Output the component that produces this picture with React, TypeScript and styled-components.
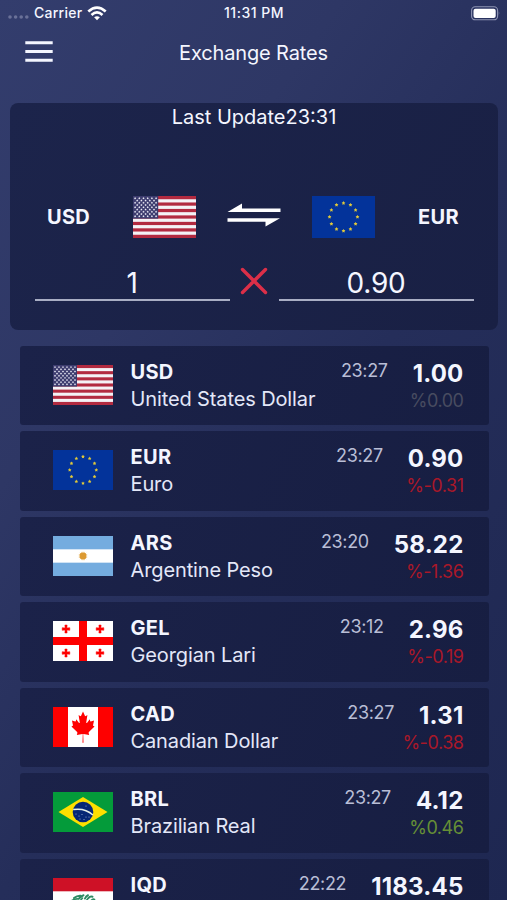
import React from "react";
import styled, { createGlobalStyle } from "styled-components";

const GlobalStyle = createGlobalStyle`
  * { box-sizing: border-box; }
  html, body { margin: 0; padding: 0; height: 900px; overflow: hidden; }
  body { font-family: Inter, "Liberation Sans", sans-serif; color: #f4f6ff; }
`;

const Screen = styled.main`
  width: 507px;
  height: 900px;
  overflow: hidden;
  display: flex;
  flex-direction: column;
  background: linear-gradient(125deg, #333d6d 0%, #2e3765 30%, #252e5a 55%, #1e2751 100%);
`;

const StatusBar = styled.div`
  height: 27px;
  flex: none;
  display: grid;
  grid-template-columns: 1fr auto 1fr;
  align-items: center;
  padding: 0 7px 1px 8px;
  font-size: 14px;
  font-weight: 500;
  line-height: 26px;
`;

const Carrier = styled.div`
  display: flex;
  align-items: center;
  gap: 5px;
  letter-spacing: 0.25px;
`;

const Clock = styled.div`
  letter-spacing: 0.5px;
`;

const BatterySlot = styled.div`
  display: flex;
  justify-content: flex-end;
`;

const Header = styled.header`
  height: 76px;
  flex: none;
  display: grid;
  grid-template-columns: 1fr auto 1fr;
  align-items: start;
  padding: 11px 25px 0;
`;

const MenuButton = styled.button`
  border: 0;
  padding: 0;
  margin: 2px 0 0;
  width: 28px;
  height: 24px;
  background: none;
  display: block;
`;

const Title = styled.h1`
  margin: 0;
  font-size: 20px;
  font-weight: 400;
  line-height: 30px;
  letter-spacing: -0.15px;
`;

const Converter = styled.section`
  flex: none;
  height: 227px;
  margin: 0 9px 0 10px;
  border-radius: 8px;
  background: linear-gradient(120deg, #1c244b, #192044);
  display: flex;
  flex-direction: column;
`;

const Updated = styled.div`
  text-align: center;
  font-size: 20px;
  line-height: 27px;
  height: 92px;
  padding-top: 0.5px;
`;

const Pair = styled.div`
  display: grid;
  grid-template-columns: 117px 63px 116px 63px 1fr;
  align-items: center;
  height: 43px;
  padding-left: 6px;
`;

const PairCode = styled.div<{ $end?: boolean }>`
  font-size: 20px;
  font-weight: 700;
  letter-spacing: 0.3px;
  padding-left: ${(p) => (p.$end ? 43 : 31)}px;
`;

const Swap = styled.div`
  display: flex;
  justify-content: center;
  padding-bottom: 4px;
`;

const Amounts = styled.div`
  display: grid;
  grid-template-columns: 195px 49px 195px;
  margin: 25px 0 0 24.5px;
`;

const Amount = styled.div`
  height: 38px;
  border-bottom: 2px solid #a9aec4;
  text-align: center;
  font-size: 28px;
  font-weight: 400;
  line-height: 41px;
  letter-spacing: -0.2px;
`;

const Cross = styled.div`
  display: flex;
  justify-content: center;
  padding-top: 4px;
`;

const List = styled.ul`
  list-style: none;
  margin: 15.5px 18.5px 0 19.5px;
  padding: 0;
  display: flex;
  flex-direction: column;
  gap: 6px;
`;

const Row = styled.li`
  flex: none;
  height: 79.5px;
  border-radius: 3px;
  background: linear-gradient(110deg, #1b2249, #171e42);
  display: flex;
  padding: 0 25px 0 33.5px;
`;

const FlagSlot = styled.div`
  padding-top: 19px;
  width: 77.5px;
`;

const Names = styled.div`
  flex: 1;
  padding-top: 13px;
  white-space: nowrap;
`;

const Code = styled.div`
  font-size: 20px;
  font-weight: 700;
  line-height: 26px;
  letter-spacing: 0.3px;
`;

const Name = styled.div`
  font-size: 20px;
  line-height: 29px;
  letter-spacing: -0.12px;
  color: #e3e7f8;
`;

const Time = styled.div`
  padding-top: 12px;
  margin-right: 25px;
  font-size: 18px;
  font-weight: 400;
  line-height: 26px;
  letter-spacing: -0.35px;
  color: #b9bed6;
`;

const Rate = styled.div`
  font-size: 24px;
  font-weight: 700;
  line-height: 30px;
  letter-spacing: 0.2px;
  text-align: right;
`;

const Figures = styled.div`
  display: grid;
  grid-template-columns: auto auto;
  align-content: start;
  justify-items: end;
`;

const RateCell = styled.div`
  padding-top: 13px;
`;

const Change = styled.div<{ $tone: string }>`
  grid-column: 1 / -1;
  font-size: 18px;
  font-weight: 400;
  line-height: 23px;
  letter-spacing: -0.45px;
  color: ${(p) => p.$tone};
`;

const FlagSvg = styled.svg`
  display: block;
`;

const starPoints = (cx: number, cy: number, r: number) =>
  Array.from({ length: 10 }, (_, i) => {
    const a = (Math.PI / 5) * i - Math.PI / 2;
    const q = i % 2 ? r * 0.55 : r;
    return `${(cx + q * Math.cos(a)).toFixed(2)},${(cy + q * Math.sin(a)).toFixed(2)}`;
  }).join(" ");

function UnitedStates() {
  return (
    <>
      <rect width="60" height="40" fill="#f4f2f6" />
      {[0, 2, 4, 6, 8, 10, 12].map((i) => (
        <rect key={i} y={(i * 40) / 13} width="60" height={40 / 13} fill="#b22a40" />
      ))}
      <rect width="24" height={(40 / 13) * 7} fill="#3c3b6e" />
      {Array.from({ length: 9 }, (_, r) =>
        Array.from({ length: r % 2 ? 5 : 6 }, (_, c) => (
          <polygon
            key={`${r}-${c}`}
            points={starPoints(2 + c * 4 + (r % 2 ? 2 : 0), 2.15 + r * 2.15, 1.15)}
            fill="#e8e8f4"
          />
        ))
      )}
    </>
  );
}

function Europe() {
  return (
    <>
      <rect width="60" height="40" fill="#03339a" />
      {Array.from({ length: 12 }, (_, i) => {
        const a = (Math.PI / 6) * i;
        return (
          <polygon
            key={i}
            points={starPoints(30 + 13.3 * Math.sin(a), 20 - 13.3 * Math.cos(a), 1.9)}
            fill="#e0c83a"
          />
        );
      })}
    </>
  );
}

function Argentina() {
  return (
    <>
      <rect width="60" height="40" fill="#74acdf" />
      <rect y="13.33" width="60" height="13.33" fill="#fff" />
      {Array.from({ length: 16 }, (_, i) => (
        <path
          key={i}
          d="M29.2 20 L30 15 L30.8 20Z"
          fill="#e5a63c"
          transform={`rotate(${i * 22.5} 30 20)`}
        />
      ))}
      <circle cx="30" cy="20" r="3.4" fill="#dc9a32" />
    </>
  );
}

function Georgia() {
  return (
    <>
      <rect width="60" height="40" fill="#fff" />
      <path d="M26 0h8v16h26v8H34v16h-8V24H0v-8h26z" fill="#fe0000" />
      {[[13, 8], [47, 8], [13, 32], [47, 32]].map(([x, y]) => (
        <path
          key={`${x}${y}`}
          d={`M${x - 1.1} ${y - 4}h2.2l-.2 2.9 2.9-.2v2.6l-2.9-.2.2 2.9h-2.2l.2-2.9-2.9.2v-2.6l2.9.2z`}
          fill="#fe0000"
          stroke="#fe0000"
          strokeWidth=".5"
        />
      ))}
    </>
  );
}

function Canada() {
  return (
    <>
      <rect width="60" height="40" fill="#fff" />
      <rect width="15" height="40" fill="#fe0000" />
      <rect x="45" width="15" height="40" fill="#fe0000" />
      <path
        transform="translate(5.1 0) scale(.83 1)"
        d="M30 4.500l-2.300 4.300c-.3.500-.8.400-1.200.200l-1.800-1 1.300 7c.3 1.200-.6 1.200-1 .7l-3.100-3.500-.5 1.800c-.1.200-.3.500-.7.400l-4-.8 1 3.800c.3.800.4 1.100-.2 1.400l-1.400.7 6.800 5.500c.3.200.4.600.3.900l-.6 2 6.700-.8c.2 0 .4.100.4.400l-.3 8.200h1.200l-.3-8.200c0-.3.200-.4.400-.4l6.700.8-.6-2c-.1-.3 0-.7.300-.9l6.800-5.500-1.400-.7c-.6-.3-.5-.6-.2-1.400l1-3.800-4 .8c-.4.100-.6-.2-.7-.4l-.5-1.800-3.100 3.500c-.4.500-1.300.500-1-.7l1.300-7-1.800 1c-.4.200-.9.300-1.200-.2z"
        fill="#fe0000"
      />
    </>
  );
}

function Brazil() {
  return (
    <>
      <rect width="60" height="40" fill="#049b3a" />
      <path d="M30 5L54.500 20 30 35 5.500 20z" fill="#fedf00" />
      <circle cx="30" cy="20" r="10.300" fill="#062776" />
      <path d="M20.200 17.600Q32 15.700 39.900 23" fill="none" stroke="#e4efe8" strokeWidth="1.500" />
      {[[23, 22], [26, 24], [29, 22.5], [33, 25], [31, 27.5], [36, 25], [27, 27], [33, 14]].map(([x, y]) => (
        <circle key={`${x}-${y}`} cx={x} cy={y} r=".55" fill="#9fb2d6" />
      ))}
    </>
  );
}

function Iraq() {
  return (
    <>
      <rect width="60" height="40" fill="#fff" />
      <rect width="60" height="13.300" fill="#ce1126" />
      <rect y="26.700" width="60" height="13.300" fill="#111" />
      <g fill="none" stroke="#2e8b63" strokeLinecap="round">
        <path d="M21 20q3-2.500 6.500-2.300M26 20.500q3-2.800 4.500-3.300M32 20.500q1-2.500 3-3.300M35.500 20q1.500-2 4-1.300" strokeWidth="2" />
        <path d="M19 22.500q3-2 6.500-1.500M27 23l2.500-3M33 23l2.500-3M38 22.500q2-2 3.500-1" strokeWidth="1.600" />
      </g>
    </>
  );
}

const flags: Record<string, () => React.ReactElement> = {
  USD: UnitedStates,
  EUR: Europe,
  ARS: Argentina,
  GEL: Georgia,
  CAD: Canada,
  BRL: Brazil,
  IQD: Iraq,
};

function Flag({ code, width = 60 }: { code: string; width?: number }) {
  const Art = flags[code];
  return (
    <FlagSvg width={width} height={(width * 2) / 3} viewBox="0 0 60 40">
      <Art />
    </FlagSvg>
  );
}

const RED = "#a91829";
const GREY = "#484c60";
const GREEN = "#668f36";

interface RateEntry {
  code: string;
  time: string;
  rate: string;
  name?: string;
  change?: string;
  tone?: string;
}

const rates: RateEntry[] = [
  { code: "USD", name: "United States Dollar", time: "23:27", rate: "1.00", change: "%0.00", tone: GREY },
  { code: "EUR", name: "Euro", time: "23:27", rate: "0.90", change: "%-0.31", tone: RED },
  { code: "ARS", name: "Argentine Peso", time: "23:20", rate: "58.22", change: "%-1.36", tone: RED },
  { code: "GEL", name: "Georgian Lari", time: "23:12", rate: "2.96", change: "%-0.19", tone: RED },
  { code: "CAD", name: "Canadian Dollar", time: "23:27", rate: "1.31", change: "%-0.38", tone: RED },
  { code: "BRL", name: "Brazilian Real", time: "23:27", rate: "4.12", change: "%0.46", tone: GREEN },
  { code: "IQD", time: "22:22", rate: "1183.45" },
];

export default function App() {
  return (
    <>
      <GlobalStyle />
      <Screen>
        <StatusBar>
          <Carrier>
            <svg width="21" height="14" viewBox="0 0 21 14" fill="#6a7198">
              <circle cx="2" cy="11" r="1.800" />
              <circle cx="7.600" cy="11" r="1.800" />
              <circle cx="13.200" cy="11" r="1.800" />
              <circle cx="18.800" cy="11" r="1.800" />
            </svg>
            Carrier
            <svg width="20" height="15" viewBox="0 0 20 15" fill="none" stroke="#fff" strokeWidth="2.700">
              <path d="M1.300 5.500Q10-2.200 18.700 5.500" />
              <path d="M4.500 8.900Q10 4 15.500 8.900" />
              <path d="M10 14.300l-2.900-3q2.900-2.200 5.800 0z" fill="#fff" stroke="none" />
            </svg>
          </Carrier>
          <Clock>11:31 PM</Clock>
          <BatterySlot>
            <svg width="30" height="15" viewBox="0 0 30 15">
              <rect x="1.600" y=".8" width="26" height="13" rx="3.600" fill="none" stroke="#8f95b3" strokeWidth="1.100" />
              <rect x="3.500" y="2.700" width="22.200" height="9.200" rx="2" fill="#fff" />
              <path d="M28.800 5.200q1.200 2.100 0 4.200z" fill="#8f95b3" />
            </svg>
          </BatterySlot>
        </StatusBar>
        <Header>
          <MenuButton aria-label="Menu">
            <svg width="28" height="24" viewBox="0 0 28 24" stroke="#f4f6ff" strokeWidth="3">
              <path d="M.3 2.800h27.400M.3 11.500h27.400M.3 20.200h27.400" />
            </svg>
          </MenuButton>
          <Title>Exchange Rates</Title>
        </Header>
        <Converter>
          <Updated>Last Update23:31</Updated>
          <Pair>
            <PairCode>USD</PairCode>
            <Flag code="USD" width={63} />
            <Swap>
              <svg width="54" height="24" viewBox="0 0 54 24" fill="#fff">
                <path d="M.5 9L15 .5V5.500H53.500V9z" />
                <path d="M53 15.300L38.500 23.500V18.800H.5V15.300z" />
              </svg>
            </Swap>
            <Flag code="EUR" width={63} />
            <PairCode $end>EUR</PairCode>
          </Pair>
          <Amounts>
            <Amount>1</Amount>
            <Cross>
              <svg width="28" height="28" viewBox="0 0 28 28" stroke="#dc2f48" strokeWidth="3.400" strokeLinecap="round">
                <path d="M2.500 2.500l23 23M25.500 2.500l-23 23" />
              </svg>
            </Cross>
            <Amount>0.90</Amount>
          </Amounts>
        </Converter>
        <List>
          {rates.map((r) => (
            <Row key={r.code}>
              <FlagSlot>
                <Flag code={r.code} />
              </FlagSlot>
              <Names>
                <Code>{r.code}</Code>
                {r.name && <Name>{r.name}</Name>}
              </Names>
              <Figures>
                <Time>{r.time}</Time>
                <RateCell>
                  <Rate>{r.rate}</Rate>
                </RateCell>
                {r.change && <Change $tone={r.tone ?? GREY}>{r.change}</Change>}
              </Figures>
            </Row>
          ))}
        </List>
      </Screen>
    </>
  );
}
